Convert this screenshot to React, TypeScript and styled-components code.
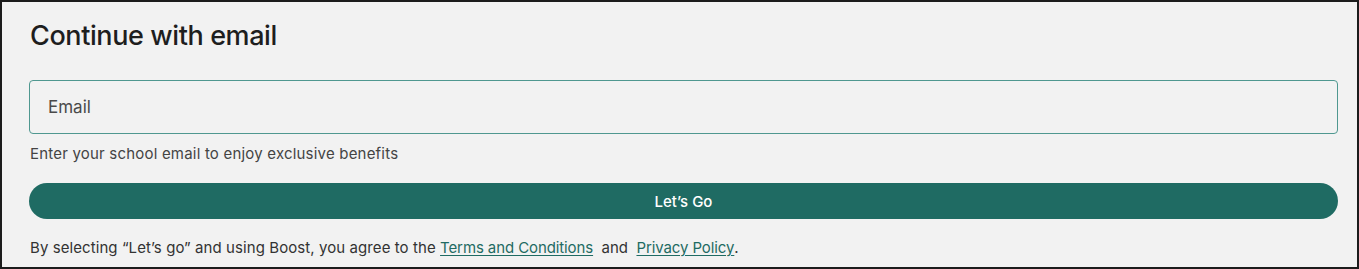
import React from "react";
import styled, { createGlobalStyle } from "styled-components";

const Global = createGlobalStyle`
  html, body { margin: 0; padding: 0; background: #f2f2f2; }
  * { box-sizing: border-box; }
`;

const Frame = styled.div`
  width: 1359px;
  height: 269px;
  border: 2px solid #1c1c1c;
  background: #f2f2f2;
  padding: 18px 19px 0 27px;
  display: flex;
  flex-direction: column;
  font-family: "Inter", "DejaVu Sans", sans-serif;
  color: #222;
  overflow: hidden;
`;

const Title = styled.h2`
  margin: 0 0 0 1px;
  font-size: 27px;
  line-height: 32px;
  font-weight: 500;
  letter-spacing: -0.4px;
  color: #1e1e1e;
`;

const Input = styled.input`
  margin-top: 28px;
  height: 54px;
  width: 100%;
  border: 1.5px solid #4f9890;
  border-radius: 4px;
  background: transparent;
  padding: 0 18px;
  font-family: inherit;
  font-size: 17px;
  color: #333;
  outline: none;
  &::placeholder { color: #4a4a4a; }
`;

const Helper = styled.p`
  margin: 10px 0 0 1px;
  font-size: 15px;
  line-height: 20px;
  letter-spacing: 0.2px;
  color: #444;
`;

const Button = styled.button`
  margin-top: 19px;
  height: 36px;
  width: 100%;
  border: none;
  border-radius: 18px;
  background: #1f6b63;
  color: #fff;
  font-family: inherit;
  font-size: 15px;
  font-weight: 500;
  cursor: pointer;
`;

const Legal = styled.p`
  margin: 19px 0 0 1px;
  font-size: 15px;
  line-height: 20px;
  color: #333;
  white-space: pre;
`;

const Lead = styled.span`
  letter-spacing: 0.08px;
`;

const Link = styled.a`
  color: #1f6b63;
  text-decoration: underline;
  text-underline-offset: 2px;
  letter-spacing: -0.1px;
`;

export default function App() {
  return (
    <>
      <Global />
      <Frame>
        <Title>Continue with email</Title>
        <Input placeholder="Email" />
        <Helper>Enter your school email to enjoy exclusive benefits</Helper>
        <Button>Let’s Go</Button>
        <Legal>
          <Lead>By selecting “Let’s go” and using Boost, you agree to the </Lead><Link href="#">Terms and Conditions</Link>  and  <Link href="#">Privacy Policy</Link>.
        </Legal>
      </Frame>
    </>
  );
}
